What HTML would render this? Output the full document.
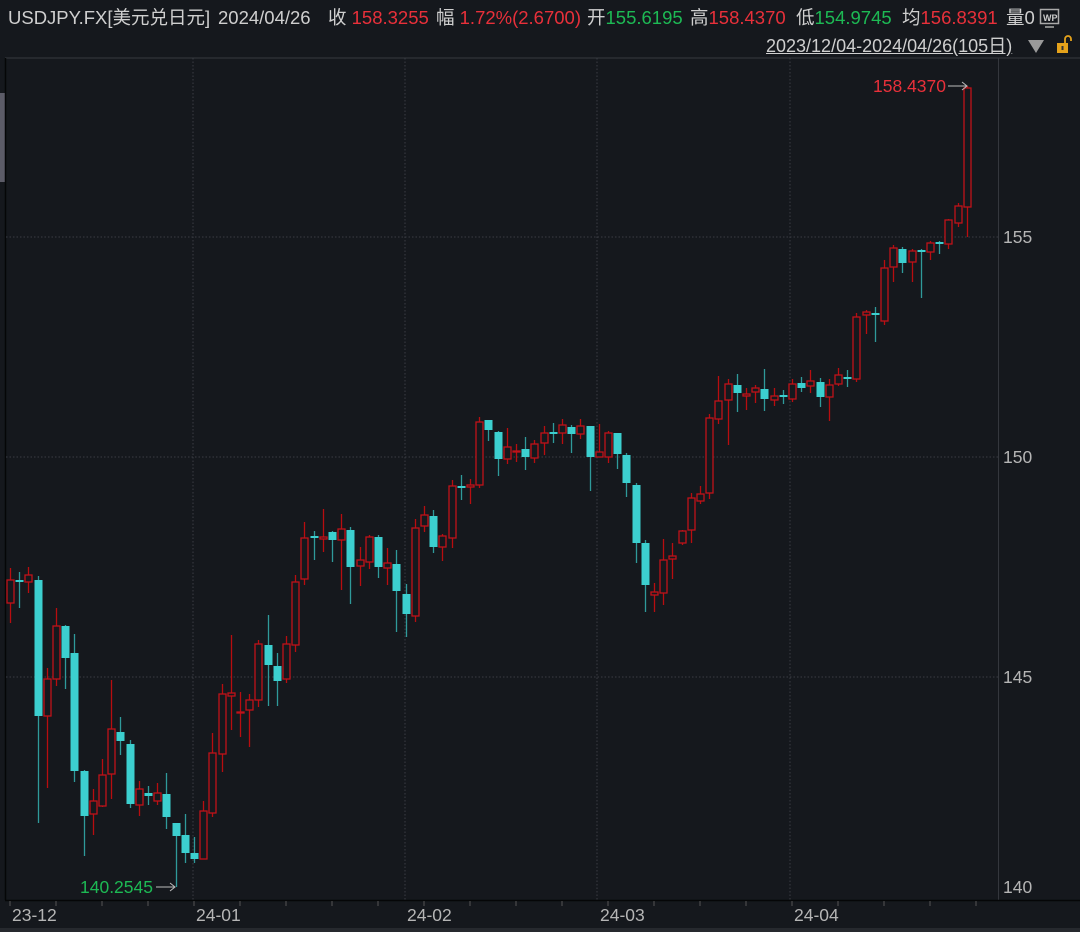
<!DOCTYPE html>
<html><head><meta charset="utf-8">
<style>
html,body{margin:0;padding:0;background:#15181d;width:1080px;height:932px;overflow:hidden;}
body{font-family:"Liberation Sans","Noto Sans CJK SC",sans-serif;position:relative;color:#cfcfcf;}
.h{position:absolute;top:7px;font-size:18.5px;line-height:22px;height:22px;white-space:nowrap;font-family:"Liberation Sans","Noto Sans CJK SC",sans-serif;}
.r{color:#e8303a}.g{color:#1db954}.w{color:#cfcfcf}
svg{position:absolute;left:0;top:0}
</style></head><body>
<div class="h" style="left:8px">USDJPY.FX[美元兑日元]</div>
<div class="h" style="left:218px">2024/04/26</div>
<div class="h" style="left:328px">收 <span class="r">158.3255</span></div>
<div class="h" style="left:436px">幅 <span class="r">1.72%(2.6700)</span></div>
<div class="h" style="left:587px">开<span class="g">155.6195</span></div>
<div class="h" style="left:690px">高<span class="r">158.4370</span></div>
<div class="h" style="left:796px">低<span class="g">154.9745</span></div>
<div class="h" style="left:902px">均<span class="r">156.8391</span></div>
<div class="h" style="left:1006px">量0</div>
<div class="h" style="left:766px;top:35px;text-decoration:underline;font-size:18px">2023/12/04-2024/04/26(105日)</div>
<svg id="s" width="1080" height="932" xmlns="http://www.w3.org/2000/svg"></svg>
<script>
var C=[
['u',580,603,568,623],['d',580,582,572,608],['u',575,582,567,593],['d',580,716,576,823],['u',679,716,668,788],
['u',626,679,608,686],['d',626,658,625,689],['d',653,771,634,782],['d',771,816,770,856],['u',801,814,789,835],
['u',775,806,759,807],['u',729,774,680,799],['d',732,741,717,755],['d',744,804,740,808],['u',789,805,781,816],
['d',793,796,786,805],['u',793,801,783,805],['d',794,817,773,829],['d',823,836,823,887],['d',835,853,814,863],
['d',853,859,837,863],['u',811,859,801,859],['u',753,813,733,817],['u',694,754,684,772],['u',693,696,635,730],
['u',712,713,692,737],['u',700,710,694,747],['u',644,700,640,707],['d',645,665,615,706],['d',666,681,653,706],
['u',644,679,636,683],['u',582,645,575,652],['u',538,579,522,585],['d',536,538,531,560],['u',537,539,509,552],
['d',532,540,531,562],['u',529,540,514,590],['d',530,567,527,604],['u',560,566,547,586],['u',537,562,535,569],
['d',537,567,535,578],['u',563,568,548,585],['d',564,591,550,632],['d',594,614,584,637],['u',528,616,519,622],
['u',515,526,506,532],['d',516,547,510,553],['u',536,547,534,561],['u',486,538,480,548],['d',486,488,475,500],
['u',485,487,479,504],['u',422,485,417,488],['d',420,430,420,441],['d',432,459,431,476],['u',447,459,428,464],
['u',451,452,444,462],['d',449,457,437,470],['u',444,458,440,463],['u',433,443,426,455],['d',432,434,423,443],
['u',425,433,419,444],['d',427,434,425,453],['u',426,434,419,439],['d',426,457,426,491],['u',452,457,424,457],
['u',433,457,431,463],['d',433,454,433,469],['d',455,483,453,497],['d',485,543,483,563],['d',543,585,540,612],
['u',592,595,583,612],['u',560,593,539,605],['u',556,559,543,579],['u',531,543,530,545],['u',498,530,493,543],
['u',494,501,486,504],['u',418,493,414,499],['u',401,419,376,424],['u',384,400,379,445],['d',385,393,374,412],
['u',394,396,388,410],['u',388,392,385,403],['d',389,399,369,411],['u',396,400,388,406],['d',395,397,390,404],
['u',384,399,379,402],['d',383,388,377,392],['u',381,386,370,393],['d',382,397,378,407],['u',385,397,379,421],
['u',375,384,368,386],['d',377,379,370,387],['u',317,379,313,382],['u',312,315,310,334],['d',313,315,307,342],
['u',268,321,260,325],['u',248,267,245,282],['d',249,263,247,273],['u',251,262,249,282],['d',250,252,249,298],
['u',243,252,241,260],['d',242,244,241,254],['u',220,244,219,249],['u',206,223,203,227],['u',88,207,86,237]];
var o='';
var F='font-family="Liberation Sans,sans-serif"';
o+='<rect x="0" y="93" width="5" height="89" fill="#5c5c68"/>';
o+='<line x1="5" y1="58" x2="1080" y2="58" stroke="#2c2f35" stroke-width="1.5"/>';
o+='<line x1="5.5" y1="58" x2="5.5" y2="900" stroke="#050607" stroke-width="1.5"/>';
o+='<line x1="998.5" y1="58" x2="998.5" y2="900" stroke="#34373d" stroke-width="1"/>';
o+='<line x1="5" y1="900.5" x2="1080" y2="900.5" stroke="#050607" stroke-width="1.5"/>';
o+='<rect x="0" y="928" width="1080" height="4" fill="#26292e"/>';
[237,457,677].forEach(function(y){o+='<line x1="6" y1="'+y+'" x2="998" y2="'+y+'" stroke="#3a3d44" stroke-dasharray="1.5,2"/>';});
[193,405,597,790].forEach(function(x){o+='<line x1="'+x+'" y1="58" x2="'+x+'" y2="900" stroke="#3a3d44" stroke-dasharray="1.5,2"/>';});
for(var t=10;t<998;t+=46){o+='<line x1="'+t+'" y1="901" x2="'+t+'" y2="906" stroke="#555"/>';}
[[12,'23-12'],[196,'24-01'],[407,'24-02'],[600,'24-03'],[794,'24-04']].forEach(function(a){
o+='<text x="'+a[0]+'" y="921" fill="#b5b5b5" font-size="17.5" '+F+'>'+a[1]+'</text>';});
[[243,'155'],[463,'150'],[683,'145'],[893,'140']].forEach(function(a){
o+='<text x="1003" y="'+a[0]+'" fill="#b5b5b5" font-size="17.5" '+F+'>'+a[1]+'</text>';});
for(var i=0;i<C.length;i++){var c=C[i],x=Math.round(10+i*9.2)+0.5;
 if(c[0]=='u'){o+='<line x1="'+x+'" y1="'+c[3]+'" x2="'+x+'" y2="'+c[4]+'" stroke="#b80d10" stroke-width="1.3"/>';
  o+='<rect x="'+(x-3.5)+'" y="'+c[1]+'" width="7" height="'+Math.max(1,c[2]-c[1])+'" fill="#15181d" stroke="#c0121a" stroke-width="1.3"/>';}
 else{o+='<line x1="'+x+'" y1="'+c[3]+'" x2="'+x+'" y2="'+c[4]+'" stroke="#2f9a9a" stroke-width="1.3"/>';
  o+='<rect x="'+(x-4)+'" y="'+c[1]+'" width="8" height="'+Math.max(2,c[2]-c[1])+'" fill="#3ccfcf"/>';}}
o+='<text x="873" y="92" fill="#e8303a" font-size="17.5" '+F+'>158.4370</text>';
o+='<path d="M948 86H967M962 82L967 86L962 90" stroke="#bbb" fill="none"/>';
o+='<text x="80" y="893" fill="#1db954" font-size="17.5" '+F+'>140.2545</text>';
o+='<path d="M156 887H175M170 883L175 887L170 891" stroke="#bbb" fill="none"/>';
o+='<polygon points="1028,40 1044,40 1036,53" fill="#9a9a9a"/>';
o+='<rect x="1040.5" y="9.5" width="18" height="14" fill="none" stroke="#aaa" stroke-width="1.5"/><text x="1043" y="21" fill="#ccc" font-size="9" font-weight="bold" '+F+'>WP</text><line x1="1045" y1="27" x2="1054" y2="27" stroke="#aaa" stroke-width="1.5"/>';
o+='<rect x="1057" y="43" width="11" height="10" fill="#e5a21b"/><path d="M1065 43V39a3 3 0 0 1 6 0v2" stroke="#e5a21b" stroke-width="1.8" fill="none"/><rect x="1061.5" y="46" width="2" height="4" fill="#333"/>';
document.getElementById('s').innerHTML=o;
</script>
</body></html>
